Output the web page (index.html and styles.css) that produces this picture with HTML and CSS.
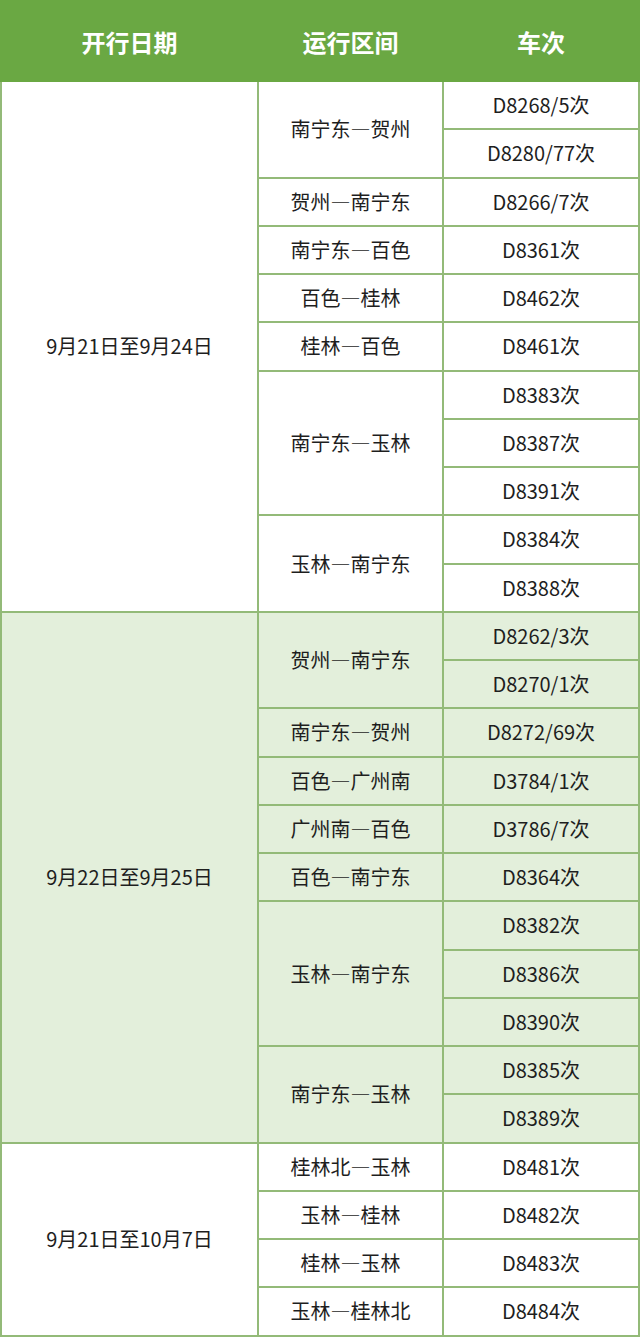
FILE: index.html
```html
<!DOCTYPE html>
<html lang="zh">
<head>
<meta charset="utf-8">
<link rel="stylesheet" href="styles.css">
</head>
<body>
<table class="tt">
  <colgroup><col class="c1"><col class="c2"><col class="c3"></colgroup>
  <thead>
    <tr><th>开行日期</th><th>运行区间</th><th>车次</th></tr>
  </thead>
  <tbody class="g1">
    <tr><td rowspan="11">9月21日至9月24日</td><td rowspan="2">南宁东—贺州</td><td>D8268/5次</td></tr>
    <tr><td>D8280/77次</td></tr>
    <tr><td>贺州—南宁东</td><td>D8266/7次</td></tr>
    <tr><td>南宁东—百色</td><td>D8361次</td></tr>
    <tr><td>百色—桂林</td><td>D8462次</td></tr>
    <tr><td>桂林—百色</td><td>D8461次</td></tr>
    <tr><td rowspan="3">南宁东—玉林</td><td>D8383次</td></tr>
    <tr><td>D8387次</td></tr>
    <tr><td>D8391次</td></tr>
    <tr><td rowspan="2">玉林—南宁东</td><td>D8384次</td></tr>
    <tr><td>D8388次</td></tr>
  </tbody>
  <tbody class="g2">
    <tr><td rowspan="11">9月22日至9月25日</td><td rowspan="2">贺州—南宁东</td><td>D8262/3次</td></tr>
    <tr><td>D8270/1次</td></tr>
    <tr><td>南宁东—贺州</td><td>D8272/69次</td></tr>
    <tr><td>百色—广州南</td><td>D3784/1次</td></tr>
    <tr><td>广州南—百色</td><td>D3786/7次</td></tr>
    <tr><td>百色—南宁东</td><td>D8364次</td></tr>
    <tr><td rowspan="3">玉林—南宁东</td><td>D8382次</td></tr>
    <tr><td>D8386次</td></tr>
    <tr><td>D8390次</td></tr>
    <tr><td rowspan="2">南宁东—玉林</td><td>D8385次</td></tr>
    <tr><td>D8389次</td></tr>
  </tbody>
  <tbody class="g1">
    <tr><td rowspan="4">9月21日至10月7日</td><td>桂林北—玉林</td><td>D8481次</td></tr>
    <tr><td>玉林—桂林</td><td>D8482次</td></tr>
    <tr><td>桂林—玉林</td><td>D8483次</td></tr>
    <tr><td>玉林—桂林北</td><td>D8484次</td></tr>
  </tbody>
</table>
</body>
</html>
```

FILE: styles.css
```css
html, body {
  margin: 0;
  padding: 0;
  background: #ffffff;
}
.tt {
  width: 638px;
  border-collapse: collapse;
  table-layout: fixed;
  font-family: "Noto Sans CJK SC", "Noto Sans", sans-serif;
  color: #1e1e1e;
}
.c1 { width: 257px; }
.c2 { width: 185px; }
.c3 { width: 196px; }
.tt th {
  height: 78px;
  padding: 0;
  background: #6aa843;
  color: #ffffff;
  font-size: 24px;
  font-weight: 700;
  text-align: center;
  border: 2px solid #6aa843;
}
.tt td {
  height: 46.25px;
  padding: 0;
  text-align: center;
  font-size: 20px;
  border: 2px solid #93ba78;
  line-height: 1;
}
.g2 td {
  background: #e3efdb;
}
```
